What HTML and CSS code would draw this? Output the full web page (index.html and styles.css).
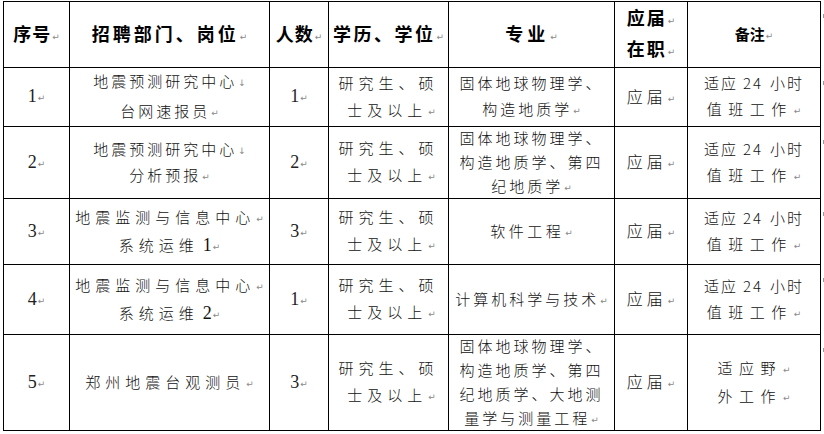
FILE: index.html
```html
<!DOCTYPE html>
<html lang="zh-CN">
<head>
<meta charset="utf-8">
<title>招聘岗位表</title>
<link rel="stylesheet" href="styles.css">
</head>
<body>
<div class="sheet">
  <!-- header -->
  <div class="c hd top left"><div class="ln ls1">序号<span class="pm">↵</span></div></div>
  <div class="c hd top"><div class="ln ls3">招聘部门、岗位<span class="pm">↵</span></div></div>
  <div class="c hd top"><div class="ln ls1">人数<span class="pm">↵</span></div></div>
  <div class="c hd top"><div class="ln ls25">学历、学位<span class="pm">↵</span></div></div>
  <div class="c hd top"><div class="ln ls4">专业<span class="pm">↵</span></div></div>
  <div class="c hd top lh27"><div class="ln ls2">应届<span class="pm">↵</span></div><div class="ln ls2">在职<span class="pm">↵</span></div></div>
  <div class="c hd top"><div class="ln small">备注<span class="pm">↵</span></div></div>
  <div class="end"></div>

  <!-- row 1 -->
  <div class="c left"><div class="ln num">1<span class="pm">↵</span></div></div>
  <div class="c lh27"><div class="ln ls3">地震预测研究中心<span class="pm">↓</span></div><div class="ln ls3">台网速报员<span class="pm">↵</span></div></div>
  <div class="c"><div class="ln num">1<span class="pm">↵</span></div></div>
  <div class="c lh27"><div class="ln ls5">研究生、硕</div><div class="ln ls5 pad">士及以上<span class="pm">↵</span></div></div>
  <div class="c lh26"><div class="ln ls3">固体地球物理学、</div><div class="ln ls3">构造地质学<span class="pm">↵</span></div></div>
  <div class="c"><div class="ln yj">应届<span class="pm">↵</span></div></div>
  <div class="c lh26"><div class="ln ls2">适应<span class="d">24</span>小时</div><div class="ln ls65">值班工作<span class="pm">↵</span></div></div>
  <div class="end"></div>

  <!-- row 2 -->
  <div class="c left"><div class="ln num">2<span class="pm">↵</span></div></div>
  <div class="c lh24"><div class="ln ls3">地震预测研究中心<span class="pm">↓</span></div><div class="ln ls3">分析预报<span class="pm">↵</span></div></div>
  <div class="c"><div class="ln num">2<span class="pm">↵</span></div></div>
  <div class="c lh27"><div class="ln ls5">研究生、硕</div><div class="ln ls5 pad">士及以上<span class="pm">↵</span></div></div>
  <div class="c lh24"><div class="ln ls3">固体地球物理学、</div><div class="ln ls3">构造地质学、第四</div><div class="ln ls3">纪地质学<span class="pm">↵</span></div></div>
  <div class="c"><div class="ln yj">应届<span class="pm">↵</span></div></div>
  <div class="c lh26"><div class="ln ls2">适应<span class="d">24</span>小时</div><div class="ln ls65">值班工作<span class="pm">↵</span></div></div>
  <div class="end"></div>

  <!-- row 3 -->
  <div class="c left"><div class="ln num">3<span class="pm">↵</span></div></div>
  <div class="c lh25"><div class="ln ls5">地震监测与信息中心<span class="pm">↵</span></div><div class="ln ls5">系统运维<span class="sn">1</span><span class="pm">↵</span></div></div>
  <div class="c"><div class="ln num">3<span class="pm">↵</span></div></div>
  <div class="c lh27"><div class="ln ls5">研究生、硕</div><div class="ln ls5 pad">士及以上<span class="pm">↵</span></div></div>
  <div class="c"><div class="ln ls35">软件工程<span class="pm">↵</span></div></div>
  <div class="c"><div class="ln yj">应届<span class="pm">↵</span></div></div>
  <div class="c lh26"><div class="ln ls2">适应<span class="d">24</span>小时</div><div class="ln ls65">值班工作<span class="pm">↵</span></div></div>
  <div class="end"></div>

  <!-- row 4 -->
  <div class="c left"><div class="ln num">4<span class="pm">↵</span></div></div>
  <div class="c lh26"><div class="ln ls5">地震监测与信息中心<span class="pm">↵</span></div><div class="ln ls5">系统运维<span class="sn">2</span><span class="pm">↵</span></div></div>
  <div class="c"><div class="ln num">1<span class="pm">↵</span></div></div>
  <div class="c lh27"><div class="ln ls5">研究生、硕</div><div class="ln ls5 pad">士及以上<span class="pm">↵</span></div></div>
  <div class="c"><div class="ln ls3">计算机科学与技术<span class="pm">↵</span></div></div>
  <div class="c"><div class="ln yj">应届<span class="pm">↵</span></div></div>
  <div class="c lh26"><div class="ln ls2">适应<span class="d">24</span>小时</div><div class="ln ls65">值班工作<span class="pm">↵</span></div></div>
  <div class="end"></div>

  <!-- row 5 -->
  <div class="c left"><div class="ln num">5<span class="pm">↵</span></div></div>
  <div class="c"><div class="ln ls5">郑州地震台观测员<span class="pm">↵</span></div></div>
  <div class="c"><div class="ln num">3<span class="pm">↵</span></div></div>
  <div class="c lh27"><div class="ln ls5">研究生、硕</div><div class="ln ls5 pad">士及以上<span class="pm">↵</span></div></div>
  <div class="c lh24"><div class="ln ls3">固体地球物理学、</div><div class="ln ls3">构造地质学、第四</div><div class="ln ls3">纪地质学、大地测</div><div class="ln ls3">量学与测量工程<span class="pm">↵</span></div></div>
  <div class="c"><div class="ln yj">应届<span class="pm">↵</span></div></div>
  <div class="c lh25"><div class="ln ls65">适应野<span class="pm">↵</span></div><div class="ln ls65">外工作<span class="pm">↵</span></div></div>
  <div class="end"></div>
</div>
</body>
</html>
```

FILE: styles.css
```css
html, body {
  margin: 0;
  padding: 0;
  background: #fff;
  overflow: hidden;
}

body {
  font-family: "Noto Sans CJK SC", "Noto Sans CJK JP", sans-serif;
  color: #111;
  font-size: 15px;
  font-weight: 300;
}

.sheet {
  display: grid;
  grid-template-columns: 67px 200px 59px 120px 166px 73px 133px 4px;
  grid-template-rows: 67px 59px 72px 66px 70px 96px;
  margin: 1px 0 0 3px;
  width: max-content;
}

.c {
  box-sizing: border-box;
  border-right: 1px solid #000;
  border-bottom: 1px solid #000;
  display: flex;
  flex-direction: column;
  justify-content: center;
  align-items: center;
  text-align: center;
  line-height: 24px;
}

.c.top { border-top: 1px solid #000; }
.c.left { border-left: 1px solid #000; }

.hd {
  font-weight: 700;
  font-size: 18px;
  color: #000;
}

.hd .small { font-size: 15px; letter-spacing: 0; }

.ln { white-space: nowrap; }

.lh24 { line-height: 24px; }
.lh25 { line-height: 25px; }
.lh26 { line-height: 26px; }
.lh27 { line-height: 27px; }

.ls1 { letter-spacing: 1px; }
.ls2 { letter-spacing: 2px; }
.ls25 { letter-spacing: 2.5px; }
.ls3 { letter-spacing: 3px; }
.ls35 { letter-spacing: 3.5px; }
.ls4 { letter-spacing: 4px; }
.ls5 { letter-spacing: 5px; }
.ls65 { letter-spacing: 6.5px; }

.yj {
  font-size: 16px;
  letter-spacing: 4px;
}

.pad { padding-left: 6px; }

.num {
  font-family: "Liberation Serif", serif;
  font-size: 18px;
  font-weight: 400;
  color: #222;
}

.sn {
  font-family: "Liberation Serif", serif;
  font-size: 18px;
  font-weight: 400;
  letter-spacing: 0;
  margin-left: 4px;
}

.d {
  letter-spacing: 2px;
  margin: 0 7px 0 5px;
}

.pm {
  font-family: "DejaVu Sans", sans-serif;
  font-size: 9px;
  font-weight: 400;
  color: #8a8a8a;
  letter-spacing: 0;
  margin-left: 1px;
  vertical-align: 1px;
}

.end {
  position: relative;
}

.end::before {
  content: "";
  position: absolute;
  left: 2px;
  top: 13px;
  width: 1px;
  height: 4px;
  background: #9a9a9a;
}
```
